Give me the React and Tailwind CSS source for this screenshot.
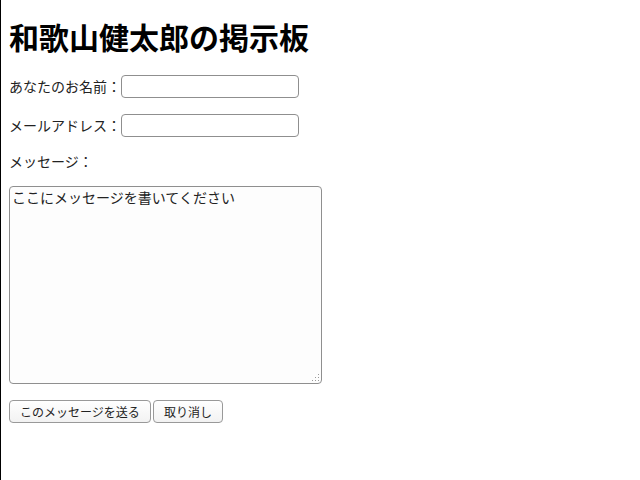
export default function App() {
    return (
        <div className="min-h-screen border-l border-black bg-white px-2 text-black" style={{ fontFamily: '"Noto Sans CJK JP", "Noto Sans", sans-serif' }}>
            <h1 className="pt-[17px] text-[30px] leading-[38px] font-semibold">和歌山健太郎の掲示板</h1>
            <form className="mt-[20px] text-[14px] text-[#222]">
                <div className="flex items-center h-[23px]">
                    <label>あなたのお名前：</label>
                    <input type="text" className="w-[178px] h-[23px] rounded border border-[#8f8f8f] bg-white px-1" />
                </div>
                <div className="flex items-center h-[23px] mt-4">
                    <label>メールアドレス：</label>
                    <input type="text" className="w-[178px] h-[23px] rounded border border-[#8f8f8f] bg-white px-1" />
                </div>
                <p className="mt-[14px] leading-[20px]">メッセージ：</p>
                <div className="relative mt-[15px] w-[313px]">
                    <textarea
                        className="block w-[313px] h-[198px] resize-none rounded border border-[#8f8f8f] bg-[#fdfdfd] px-[2px] leading-[20px] text-[#222]"
                        defaultValue="ここにメッセージを書いてください"
                    />
                    <svg className="absolute right-[2px] bottom-[2px]" width="10" height="10" viewBox="0 0 10 10" fill="#999">
                        <rect x="8" y="2" width="1" height="1" />
                        <rect x="5" y="5" width="1" height="1" />
                        <rect x="8" y="5" width="1" height="1" />
                        <rect x="2" y="8" width="1" height="1" />
                        <rect x="5" y="8" width="1" height="1" />
                        <rect x="8" y="8" width="1" height="1" />
                    </svg>
                </div>
                <div className="mt-[16px] flex gap-[2px]">
                    <button type="button" className="h-[23px] w-[142px] rounded border border-[#999] bg-gradient-to-b from-white to-[#f2f2f2] text-[12px]">このメッセージを送る</button>
                    <button type="button" className="h-[23px] w-[70px] rounded border border-[#999] bg-gradient-to-b from-white to-[#f2f2f2] text-[12px]">取り消し</button>
                </div>
            </form>
        </div>
    );
}
